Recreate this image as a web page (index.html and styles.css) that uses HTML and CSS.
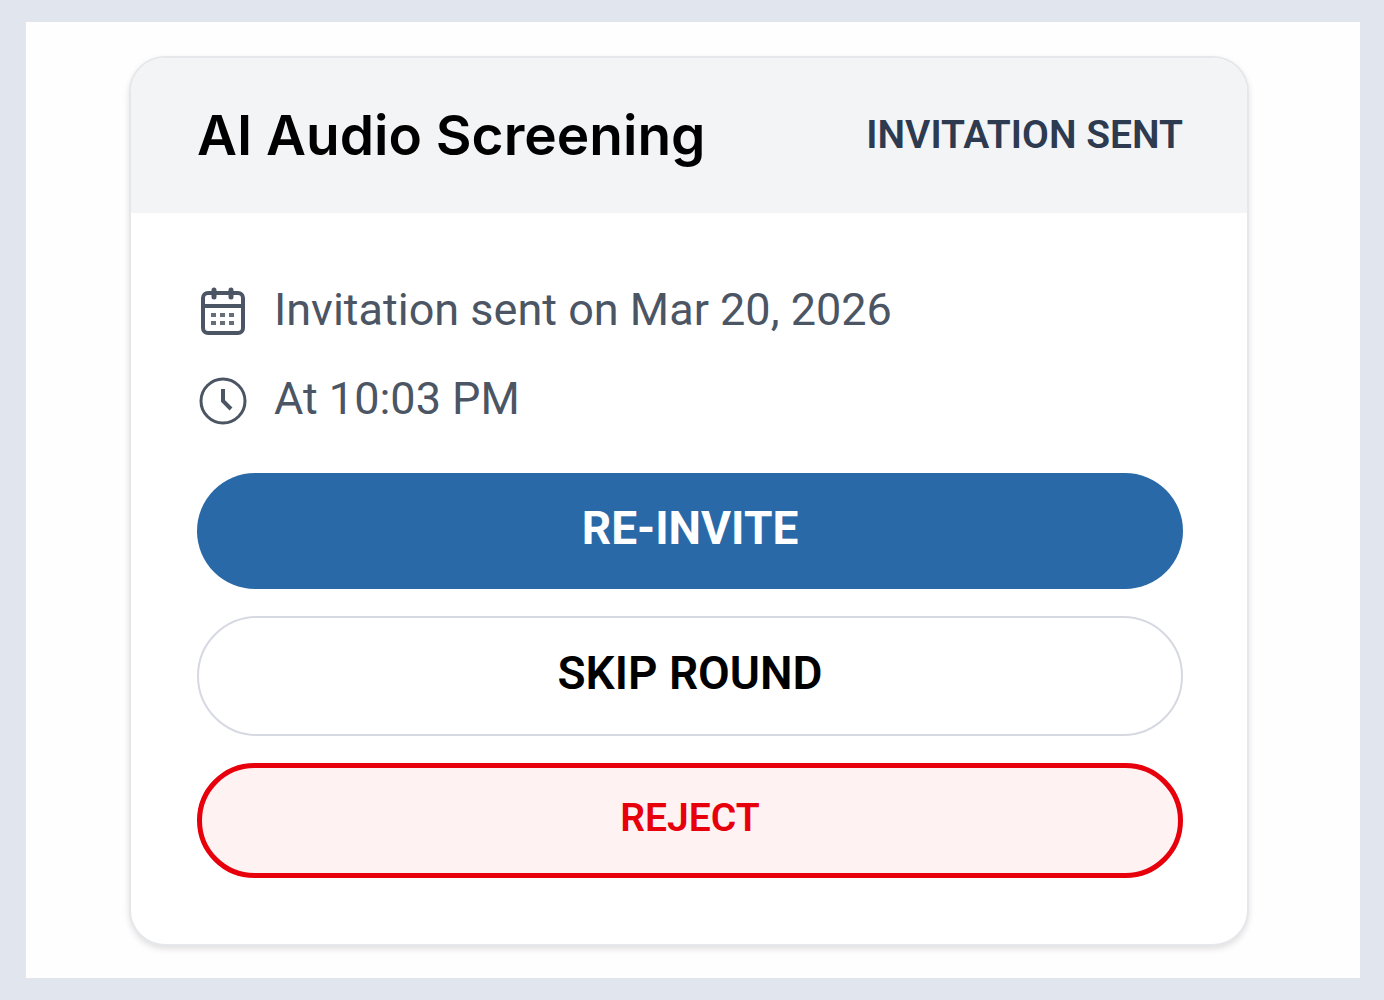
FILE: index.html
```html
<!DOCTYPE html>
<html lang="en">
<head>
  <meta charset="UTF-8" />
  <meta name="viewport" content="width=device-width, initial-scale=1.0"/>
  <title>AI Audio Screening</title>
  <link rel="stylesheet" href="styles.css">
</head>
<body>
  <main class="page">
    <section class="card">
      <header class="card-header">
        <h1>AI Audio Screening</h1>
        <span class="status">INVITATION SENT</span>
      </header>

      <div class="card-body">
        <ul class="details">
          <li>
            <!-- calendar -->
            <svg class="icon" viewBox="0 0 50 50" fill="none" stroke="currentColor" stroke-width="4" stroke-linecap="round" aria-hidden="true">
              <rect x="5" y="6" width="40" height="40" rx="5"/>
              <path d="M5 19h40" stroke-width="4"/>
              <path d="M16 3v7M33 3v7" stroke-width="5"/>
              <path d="M13 28h5M22 28h5M31 28h5M13 36h5M22 36h5M31 36h5" stroke-width="4" stroke-linecap="butt" opacity="0.85"/>
            </svg>
            <span>Invitation sent on Mar 20, 2026</span>
          </li>
          <li>
            <!-- clock -->
            <svg class="icon" viewBox="0 0 50 50" fill="none" stroke="currentColor" stroke-width="3" aria-hidden="true">
              <circle cx="25" cy="25" r="22"/>
              <path d="M25 13v12l8 8" stroke-width="4"/>
            </svg>
            <span>At 10:03 PM</span>
          </li>
        </ul>

        <div class="actions">
          <button type="button" class="btn btn-primary">RE-INVITE</button>
          <button type="button" class="btn btn-outline">SKIP ROUND</button>
          <button type="button" class="btn btn-danger">REJECT</button>
        </div>
      </div>
    </section>
  </main>
</body>
</html>
```
FILE: styles.css
```css
* {
  box-sizing: border-box;
}

body {
  margin: 0;
  min-height: 100vh;
  display: flex;
  padding: 22px 24px 22px 26px;
  background: #e1e5ed;
  font-family: Roboto, "Liberation Sans", sans-serif;
}

.page {
  flex: 1;
  padding: 34px 111px 32px 103px;
  background: #fefefe;
}

.card {
  border: 2px solid #e5e7eb;
  border-radius: 36px;
  background: #fff;
  box-shadow: 0 3px 6px rgba(0, 0, 0, 0.12);
  overflow: hidden;
}

.card-header {
  display: flex;
  align-items: center;
  justify-content: space-between;
  padding: 45px 64px 46px 66px;
  background: #f3f4f6;
}

h1 {
  margin: 0;
  color: #000;
  font-family: Inter, "Liberation Sans", sans-serif;
  font-size: 55px;
  font-weight: 600;
  line-height: 64px;
}

.status {
  color: #2d3a50;
  font-size: 39px;
  font-weight: 600;
  line-height: 64px;
}

.card-body {
  padding: 67px 64px 66px 66px;
}

.details {
  display: grid;
  gap: 25px;
  margin: 0 0 40px;
  padding: 0 0 0 1px;
  list-style: none;
  color: #4b5563;
  font-size: 45px;
  line-height: 60px;
}

.details li {
  display: flex;
  align-items: center;
  gap: 26px;
}

.details span {
  padding-bottom: 4px;
}

.icon {
  width: 50px;
  height: 50px;
  flex: none;
}

.actions {
  display: grid;
  gap: 27px;
}

.btn {
  padding: 23px 26px 29px;
  border: 0;
  border-radius: 60px;
  font-family: inherit;
  font-size: 46px;
  font-weight: 600;
  line-height: 64px;
  cursor: pointer;
}

.btn-primary {
  background: #2969a7;
  color: #fff;
  font-weight: 700;
}

.btn-outline {
  border: 2px solid #d6d9e1;
  background: #fff;
  color: #000;
}

.btn-danger {
  padding: 18px 20px 23px;
  border: 5px solid #e7000b;
  background: #fef2f2;
  color: #e7000b;
  font-size: 39px;
}
```
